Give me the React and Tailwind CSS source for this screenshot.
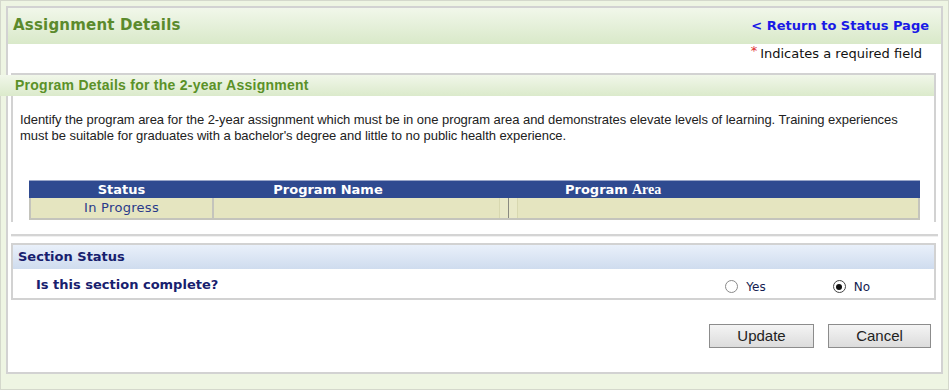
import React from 'react'

const verdana = { fontFamily: '"DejaVu Sans", Verdana, sans-serif' }
const arial = { fontFamily: '"Liberation Sans", Arial, sans-serif' }

export default function App() {
  return (
    <div className="w-[950px] h-[390px] bg-white">
      <div className="w-[949px] h-[390px] border border-[#d4d8cc] bg-[#eef5e3] pt-[5px] px-[5px]">
        <div className="h-[368px] border-2 border-[#d2d2d2] bg-white flex flex-col">
          {/* page header */}
          <div className="h-[36px] shrink-0 flex items-center justify-between pl-[5px] pr-[12px] pb-[1px] bg-gradient-to-b from-[#f1f7ea] to-[#d9e9c9]">
            <h1 className="text-[15px] font-bold text-[#5b8a2c] tracking-[0.2px]" style={verdana}>Assignment Details</h1>
            <a href="#" className="text-[13px] font-bold text-[#1a1ae6]" style={verdana}>&lt; Return to Status Page</a>
          </div>

          <div className="h-[20px] shrink-0 flex items-center justify-end pr-[19px] text-[13px] text-[#111]" style={verdana}>
            <span className="text-[#e03030] mr-[3px] relative -top-[3px]">*</span>Indicates a required field
          </div>

          {/* program details */}
          <div className="mt-[9px] ml-[3px] mr-[5px] pb-[2px] border-t-2 border-l-2 border-r-2 border-[#d2d2d2]">
            <div className="-ml-[13px] h-[21px] flex items-center pl-[15px] bg-gradient-to-b from-[#f1f7ea] to-[#dbeacb] text-[14px] tracking-[0.25px] font-bold text-[#5b9128]" style={arial}>
              Program Details for the 2-year Assignment
            </div>
            <p className="mt-[16px] px-[7px] text-[13px] leading-[16px] tracking-[-0.05px] text-[#222]" style={arial}>
              Identify the program area for the 2-year assignment which must be in one program area and demonstrates elevate levels of learning. Training experiences must be suitable for graduates with a bachelor's degree and little to no public health experience.
            </p>
            <div className="mt-[36px] ml-[16px] mr-[14px] text-[13px]" style={verdana}>
              <div className="flex h-[18px] bg-[#2f4a90] text-white font-bold border-t border-[#9aa6c8]">
                <div className="w-[185px] flex items-center justify-center">Status</div>
                <div className="w-[228px] flex items-center justify-center">Program Name</div>
                <div className="flex-1 flex items-center pl-[123px]">
                  Program <span className="ml-[4px] text-[14px]" style={{ fontFamily: '"Liberation Serif", "Times New Roman", serif' }}>Area</span>
                </div>
              </div>
              <div className="flex h-[22px] bg-[#e5e5c0] border-2 border-t-0 border-[#c4c4bc]">
                <div className="w-[183px] flex items-center justify-center text-[#2a3a8a] tracking-[0.3px] border-r-2 border-[#c4c4bc]">In Progress</div>
                <div className="w-[285px]"></div>
                <div className="w-[19px] border-x border-[#d8d8b0] bg-[#e9e9c8] flex justify-center"><div className="w-px bg-[#8a8a80]" /></div>
                <div className="flex-1"></div>
              </div>
            </div>
          </div>

          <div className="mt-[12px] ml-[3px] mr-[3px] h-[3px] border-t-2 border-[#d4d4d4] bg-[#f0f0f0]" />

          {/* section status */}
          <div className="mt-[6px] ml-[3px] mr-[5px] border-2 border-[#d2d2d2]" style={verdana}>
            <div className="h-[24px] flex items-center pl-[5px] bg-gradient-to-b from-[#e9f0fa] to-[#cfdcee] text-[13px] font-bold text-[#17206e]">
              Section Status
            </div>
            <div className="h-[29px] flex items-center pt-[2px] text-[13px] font-bold text-[#17206e]">
              <span className="ml-[23px]">Is this section complete?</span>
              <label className="ml-auto flex items-center gap-[8px] mt-[4px]">
                <span className="w-[13px] h-[13px] rounded-full border border-[#8a8a8a] bg-white" />
                <span className="text-[12px] font-normal text-[#141c50]">Yes</span>
              </label>
              <label className="ml-[67px] mr-[64px] flex items-center gap-[8px] mt-[4px]">
                <span className="w-[13px] h-[13px] rounded-full border border-[#444] bg-white flex items-center justify-center">
                  <span className="w-[6px] h-[6px] rounded-full bg-[#111]" />
                </span>
                <span className="text-[12px] font-normal text-[#141c50]">No</span>
              </label>
            </div>
          </div>

          <div className="mt-[24px] flex justify-end gap-[14px] pr-[10px]">
            <button className="w-[105px] h-[24px] border border-[#8c8c8c] bg-gradient-to-b from-[#f4f4f4] to-[#dcdcdc] text-[15px] text-[#222]" style={arial}>Update</button>
            <button className="w-[103px] h-[24px] border border-[#8c8c8c] bg-gradient-to-b from-[#f4f4f4] to-[#dcdcdc] text-[15px] text-[#222]" style={arial}>Cancel</button>
          </div>
        </div>
      </div>
    </div>
  )
}
